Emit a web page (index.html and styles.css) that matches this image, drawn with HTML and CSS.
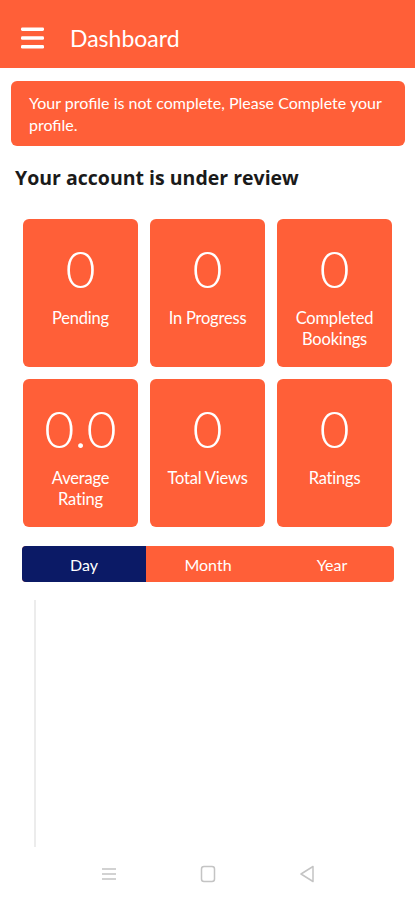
FILE: index.html
```html
<!DOCTYPE html>
<html lang="en">
<head>
<meta charset="utf-8">
<meta name="viewport" content="width=device-width, initial-scale=1">
<title>Dashboard</title>
<link rel="stylesheet" href="styles.css">
</head>
<body>
<div class="app">
  <header class="topbar">
    <svg class="menu-icon" width="24" height="24" viewBox="0 0 24 24" aria-hidden="true">
      <rect x="0" y="1" width="24" height="3.6" rx="1.4" fill="#fff"/>
      <rect x="0" y="10.2" width="24" height="3.6" rx="1.4" fill="#fff"/>
      <rect x="0" y="19.4" width="24" height="3.6" rx="1.4" fill="#fff"/>
    </svg>
    <h1 class="topbar-title">Dashboard</h1>
  </header>

  <main class="content">
    <div class="alert">Your profile is not complete, Please Complete your profile.</div>

    <h2 class="review">Your account is under review</h2>

    <section class="stats">
      <div class="stat"><div class="stat-num">0</div><div class="stat-label">Pending</div></div>
      <div class="stat"><div class="stat-num">0</div><div class="stat-label">In Progress</div></div>
      <div class="stat"><div class="stat-num">0</div><div class="stat-label">Completed Bookings</div></div>
      <div class="stat"><div class="stat-num">0.0</div><div class="stat-label">Average Rating</div></div>
      <div class="stat"><div class="stat-num">0</div><div class="stat-label">Total Views</div></div>
      <div class="stat"><div class="stat-num">0</div><div class="stat-label">Ratings</div></div>
    </section>

    <nav class="segments">
      <div class="seg seg-active">Day</div>
      <div class="seg">Month</div>
      <div class="seg">Year</div>
    </nav>

    <div class="chart">
      <div class="chart-axis"></div>
    </div>
  </main>

  <footer class="sysnav">
    <svg width="16" height="16" viewBox="0 0 16 16" aria-hidden="true">
      <path d="M1 3h14M1 8h14M1 13h14" stroke="#c4c4c4" stroke-width="1.6" fill="none"/>
    </svg>
    <svg width="16" height="18" viewBox="0 0 16 18" aria-hidden="true">
      <rect x="1.5" y="1.5" width="13" height="15" rx="2.5" stroke="#c4c4c4" stroke-width="1.5" fill="none"/>
    </svg>
    <svg width="16" height="18" viewBox="0 0 16 18" aria-hidden="true">
      <path d="M14 1.5 L2 9 L14 16.5 Z" stroke="#c4c4c4" stroke-width="1.5" fill="none" stroke-linejoin="round"/>
    </svg>
  </footer>
</div>
</body>
</html>
```
FILE: styles.css
```css
* { box-sizing: border-box; }

html, body {
  margin: 0;
  padding: 0;
  background: #fff;
}

body {
  font-family: Lato, "Open Sans", "Liberation Sans", sans-serif;
  color: #fff;
}

.app {
  width: 415px;
  height: 900px;
  display: flex;
  flex-direction: column;
}

.topbar {
  flex: none;
  height: 68px;
  background: #ff5f38;
  display: flex;
  align-items: center;
  padding: 8px 0 0 21px;
}

.menu-icon {
  width: 23px;
  height: 24px;
  flex: none;
}

.topbar-title {
  margin: 0 0 0 26px;
  font-size: 23px;
  font-weight: 400;
  line-height: 28px;
  color: #fff;
}

.content {
  flex: 1;
  display: flex;
  flex-direction: column;
}

.alert {
  margin: 13px 10px 0 11px;
  background: #ff5f38;
  border-radius: 6px;
  padding: 11px 18px 10px 18px;
  font-size: 16px;
  line-height: 22px;
  color: #fff;
}

.review {
  margin: 19px 0 0 15px;
  font-family: "Open Sans", "Noto Sans", sans-serif;
  font-size: 19.5px;
  font-weight: 700;
  color: #1a1a1a;
  line-height: 26px;
}

.stats {
  margin: 28px 23px 0 23px;
  display: grid;
  grid-template-columns: repeat(3, 1fr);
  column-gap: 12px;
  row-gap: 12px;
}

.stat {
  height: 148px;
  background: #ff5f38;
  border-radius: 6px;
  display: flex;
  flex-direction: column;
  align-items: center;
  padding-top: 21px;
  text-align: center;
}

.stat-num {
  font-size: 52px;
  font-weight: 300;
  line-height: 56px;
}

.stat-label {
  margin-top: 12px;
  font-size: 16.5px;
  line-height: 21px;
  padding: 0 6px;
  letter-spacing: -0.2px;
}

.segments {
  margin: 19px 21px 0 22px;
  height: 36px;
  display: grid;
  grid-template-columns: repeat(3, 1fr);
  background: #ff5f38;
  border-radius: 4px;
  overflow: hidden;
}

.seg {
  display: flex;
  align-items: center;
  justify-content: center;
  font-size: 16px;
  color: #fff;
}

.seg-active {
  background: #0b1a66;
}

.chart {
  margin: 18px 0 0 34px;
  height: 247px;
  display: flex;
}

.chart-axis {
  width: 2px;
  height: 100%;
  background: #ececec;
}

.sysnav {
  flex: none;
  height: 56px;
  display: flex;
  align-items: center;
  justify-content: center;
  gap: 83px;
  padding-bottom: 2px;
  margin-top: auto;
}
```
